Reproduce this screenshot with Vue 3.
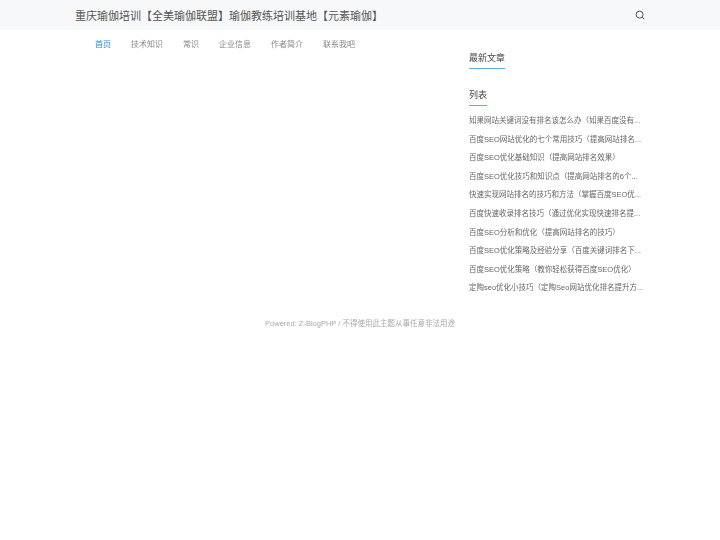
<script setup>
const nav = ['首页', '技术知识', '常识', '企业信息', '作者简介', '联系我吧']
const posts = [
  '如果网站关键词没有排名该怎么办（如果百度没有...',
  '百度SEO网站优化的七个常用技巧（提高网站排名...',
  '百度SEO优化基础知识（提高网站排名效果）',
  '百度SEO优化技巧和知识点（提高网站排名的6个...',
  '快速实现网站排名的技巧和方法（掌握百度SEO优...',
  '百度快速收录排名技巧（通过优化实现快速排名提...',
  '百度SEO分析和优化（提高网站排名的技巧）',
  '百度SEO优化策略及经验分享（百度关键词排名下...',
  '百度SEO优化策略（教你轻松获得百度SEO优化）',
  '定陶seo优化小技巧（定陶Seo网站优化排名提升方...'
]
</script>

<template>
  <div class="page">
    <header class="top">
      <h1 class="title">重庆瑜伽培训【全美瑜伽联盟】瑜伽教练培训基地【元素瑜伽】</h1>
      <svg class="search" viewBox="0 0 10 10" width="10" height="10" fill="none" stroke="#555" stroke-width="1">
        <circle cx="4.6" cy="4.6" r="3.5" />
        <path d="M7.2 7.2 9.2 9.2" />
      </svg>
    </header>
    <div class="body">
      <main class="main">
        <nav class="nav">
          <a v-for="(n, i) in nav" :key="n" :class="{ on: i === 0 }">{{ n }}</a>
        </nav>
      </main>
      <aside class="side">
        <h3 class="head first"><span>最新文章</span></h3>
        <h3 class="head"><span>列表</span></h3>
        <ul class="list">
          <li v-for="p in posts" :key="p">{{ p }}</li>
        </ul>
      </aside>
    </div>
    <footer class="foot">Powered: Z-BlogPHP / 不得使用此主题从事任意非法用途</footer>
  </div>
</template>

<style scoped>
.page {
  font-family: "Liberation Sans", "Noto Sans CJK SC", sans-serif;
  color: #555;
  width: 720px;
  filter: blur(0.35px);
}
.top {
  height: 30px;
  background: #f7f8f9;
  display: flex;
  align-items: center;
  justify-content: space-between;
  padding: 0 75px;
}
.title {
  margin: 0;
  font-size: 11px;
  font-weight: 400;
  color: #555;
  white-space: nowrap;
}
.search { display: block; }
.body {
  display: flex;
  padding-left: 75px;
}
.main { width: 394px; }
.nav {
  display: flex;
  gap: 20px;
  padding: 9px 0 0 20px;
  font-size: 8px;
  line-height: 12px;
  color: #888;
}
.on { color: #1e88e5; }
.side { width: 175px; }
.head {
  margin: 20px 0 0;
  font-size: 9px;
  font-weight: 400;
  color: #444;
  line-height: 12px;
}
.head.first { margin-top: 22px; }
.head span {
  display: inline-block;
  padding-bottom: 4px;
  border-bottom: 1px solid #5aa9ec;
}
.list {
  list-style: none;
  margin: 6px 0 0;
  padding: 0;
}
.list li {
  height: 18.6px;
  line-height: 18.6px;
  font-size: 7.5px;
  color: #666;
  white-space: nowrap;
}
.foot {
  text-align: center;
  width: 720px;
  margin-top: 20px;
  font-size: 7.5px;
  line-height: 12px;
  color: #aaa;
}
</style>
